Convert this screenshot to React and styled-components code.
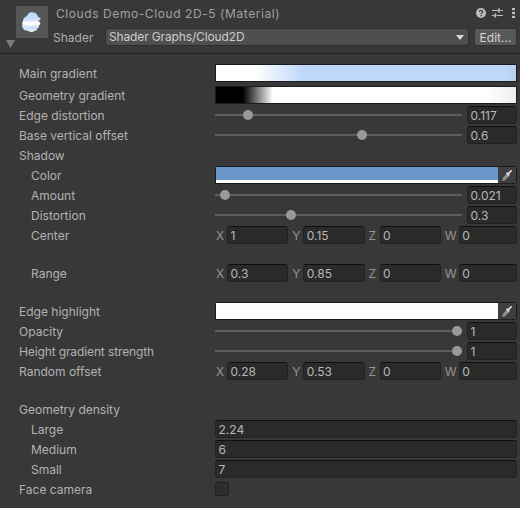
import React from "react";
import styled, { createGlobalStyle } from "styled-components";

const Global = createGlobalStyle`
  html, body { margin: 0; padding: 0; background: #383838; }
  body { font-family: Inter, "Noto Sans", sans-serif; font-size: 12px; color: #bdbdbd; }
`;

const Inspector = styled.div`
  width: 520px;
  height: 508px;
  overflow: hidden;
  background: #383838;
  box-sizing: border-box;
`;

const Header = styled.header`
  position: relative;
  display: grid;
  grid-template-columns: 53px 52px 1fr;
  grid-template-rows: 28px 18px;
  height: 54px;
  box-sizing: border-box;
  border-bottom: 1px solid #232323;
  margin-bottom: 10px;
`;

const Thumb = styled.div`
  grid-row: 1 / span 2;
  margin: 6px 0 0 16px;
  width: 32px;
  height: 32px;
  background: #565656;
  display: flex;
  align-items: center;
  justify-content: center;
`;

const Fold = styled.svg`
  position: absolute;
  left: 6px;
  top: 40px;
`;

const TitleRow = styled.div`
  grid-column: 2 / span 2;
  display: flex;
  align-items: flex-start;
  padding: 6px 5px 0 3px;
  height: 22px;
`;

const Title = styled.div`
  flex: 1;
  font-size: 12px;
  line-height: 15px;
  letter-spacing: 0.58px;
  color: #a0a0a0;
`;

const HeadIcons = styled.div`
  display: flex;
  align-items: center;
  gap: 6px;
  padding: 2px 0 0 0;
`;

const ShaderLabel = styled.div`
  font-size: 12px;
  line-height: 18px;
  color: #aeaeae;
  padding-top: 1px;
`;

const ShaderControls = styled.div`
  display: flex;
  gap: 5px;
  padding-right: 3px;
`;

const Dropdown = styled.div`
  flex: 1;
  height: 18px;
  box-sizing: border-box;
  display: flex;
  align-items: center;
  justify-content: space-between;
  padding: 0 4px 0 3px;
  background: #4f4f4f;
  border: 1px solid #2e2e2e;
  border-radius: 3px;
  color: #cccccc;
  letter-spacing: -0.14px;
  line-height: 16px;
`;

const EditButton = styled.div`
  width: 43px;
  height: 18px;
  box-sizing: border-box;
  display: flex;
  align-items: center;
  justify-content: center;
  background: #585858;
  border: 1px solid #303030;
  border-radius: 3px;
  color: #d4d4d4;
`;

const Body = styled.div`
  display: flex;
  flex-direction: column;
  padding: 0 3px 0 0;
`;

const Row = styled.div`
  display: grid;
  grid-template-columns: 215px 1fr;
  align-items: start;
  height: 20px;
  margin-top: ${(p) => p.$gap || 0}px;
`;

const Label = styled.div`
  line-height: 20px;
  padding-left: ${(p) => (p.$indent ? 31 : 19)}px;
  letter-spacing: ${(p) => (p.$tight ? "-0.12px" : "0")};
  color: #b2b2b2;
  white-space: nowrap;
`;

const GradientBar = styled.div`
  height: 18px;
  box-sizing: border-box;
  border: 1px solid #1b1b1b;
  background: ${(p) => p.$bg};
`;

const SliderWrap = styled.div`
  display: flex;
  gap: 5px;
`;

const Track = styled.div`
  position: relative;
  flex: 1;
  height: 18px;
  &::before {
    content: "";
    position: absolute;
    left: 0;
    right: 0;
    top: 8px;
    height: 2px;
    background: #5e5e5e;
  }
`;

const Knob = styled.div`
  position: absolute;
  top: 4px;
  width: 10px;
  height: 10px;
  border-radius: 50%;
  background: #999999;
  transform: translateX(-5px);
`;

const Field = styled.div`
  box-sizing: border-box;
  height: 18px;
  flex: ${(p) => (p.$fixed ? "0 0 50px" : "1")};
  min-width: 0;
  display: flex;
  align-items: center;
  padding: 1px 0 0 2.5px;
  background: #2a2a2a;
  border: 1px solid #212121;
  border-top-color: #0f0f0f;
  border-radius: 3px;
  color: #b8b8b8;
  line-height: 15px;
`;

const ColorBox = styled.div`
  display: flex;
  height: 18px;
  box-sizing: border-box;
  border: 1px solid #1b1b1b;
  border-radius: 2px 3px 3px 2px;
  background: #3a3a3a;
`;

const Swatch = styled.div`
  flex: 1;
  display: flex;
  flex-direction: column;
`;

const SwatchColor = styled.div`
  flex: 1;
  background: ${(p) => p.$color};
`;

const SwatchAlpha = styled.div`
  height: 3px;
  background: #ffffff;
`;

const Picker = styled.div`
  flex: 0 0 18px;
  display: flex;
  align-items: center;
  justify-content: center;
  background: #3e3e3e;
`;

const Vec = styled.div`
  display: grid;
  grid-template-columns: repeat(4, 1fr);
  gap: 3px;
`;

const Cell = styled.div`
  display: flex;
  align-items: center;
`;

const Axis = styled.span`
  flex: 0 0 ${(p) => p.$w}px;
  padding-left: 1px;
  box-sizing: border-box;
  color: #969696;
`;

const Check = styled.div`
  width: 14px;
  height: 14px;
  margin-top: 2px;
  box-sizing: border-box;
  background: #2e2e2e;
  border: 1px solid #212121;
  border-radius: 2px;
`;

const Help = () => (
  <svg width="10" height="10" viewBox="0 0 10 10">
    <circle cx="5" cy="5" r="5" fill="#bebebe" />
    <path d="M3.3 3.9C3.4 2.9 4.1 2.4 5 2.4c1 0 1.7.6 1.7 1.4 0 .7-.4 1-1 1.4-.4.3-.6.4-.6.9" fill="none" stroke="#383838" strokeWidth="1.2" />
    <rect x="4.4" y="6.9" width="1.3" height="1.3" fill="#383838" />
  </svg>
);

const Tune = () => (
  <svg width="11" height="10" viewBox="0 0 11 10">
    <path d="M0 2.5h6M8.5 2.5h2.5M0 7.5h2M4.5 7.5h6.5" stroke="#bebebe" strokeWidth="1.2" fill="none" />
    <path d="M7 .5v4M3.3 5.5v4" stroke="#bebebe" strokeWidth="1.8" fill="none" />
  </svg>
);

const Kebab = () => (
  <svg width="3" height="10" viewBox="0 0 3 10" style={{ marginLeft: 3 }}>
    <rect y="0" width="3" height="2.2" fill="#bebebe" />
    <rect y="3.9" width="3" height="2.2" fill="#bebebe" />
    <rect y="7.8" width="3" height="2.2" fill="#bebebe" />
  </svg>
);

const Cloud = () => (
  <svg width="32" height="32" viewBox="0 0 32 32">
    <defs>
      <linearGradient id="cl" x1="0" y1="0" x2="0" y2="1">
        <stop offset="0" stopColor="#bcd5f8" />
        <stop offset="0.4" stopColor="#cfe1fb" />
        <stop offset="0.55" stopColor="#ffffff" />
        <stop offset="0.8" stopColor="#c6dcfa" />
        <stop offset="1" stopColor="#f2f7ff" />
      </linearGradient>
    </defs>
    <g transform="translate(-1.5 1) scale(1.05)">
      <path
        d="M13 6.5c1-1.5 3-2 5-1.3 2 .2 3.5 1.2 4 3 .2 1 .6 1.4 1.5 1.7 1.2.3 1.7 1.2 1 2-.6.7-1.5.7-1.6 1.4.8.7 1.8 1.4 1.6 2.6-.2 1-1.2 1.2-1.2 2.2 0 1.3-.8 2-1.6 2.6-.4 1.4-1.2 1.8-2.6 2.1-1.4.6-2.8 1.3-4.2.8-1.4-.4-2-1.2-3.4-1.2-1.7 0-3.3-.8-3.4-2.4-.8-.6-1.3-1.5-.6-2.6.1-1-.4-1.8 0-2.8.3-1 .8-1.2.8-2.2 0-1.2.4-2 1.6-2.4.8-.6 1.2-1.4 2.6-2.5z"
        fill="url(#cl)"
      />
      <path d="M8 15.5c3-1.2 5 .6 8-.4 2-.6 4-.4 6 .8-2 1.2-4 .8-6 1.4-3 .8-5-.6-8-1.8z" fill="#ffffff" />
    </g>
  </svg>
);

const Dropper = () => (
  <svg width="13" height="13" viewBox="0 0 13 13">
    <path d="M1 12l.7-3 4.3-4.3 2.3 2.3L4 11.3z" fill="#8f8f8f" />
    <path d="M5.6 3.6l1.6-.1 2.2-2.2c.9-.8 2.1.4 1.3 1.3L8.5 4.8l-.1 1.6-.9.8-2.8-2.8z" fill="#d8d8d8" />
  </svg>
);

const Slider = ({ value, text }) => (
  <SliderWrap>
    <Track>
      <Knob style={{ left: `calc(5px + (100% - 10px) * ${value})` }} />
    </Track>
    <Field $fixed>{text}</Field>
  </SliderWrap>
);

const Vector = ({ values }) => (
  <Vec>
    {["X", "Y", "Z", "W"].map((a, i) => (
      <Cell key={a}>
        <Axis $w={a === "W" ? 15 : 12}>{a}</Axis>
        <Field>{values[i]}</Field>
      </Cell>
    ))}
  </Vec>
);

const ColorField = ({ color }) => (
  <ColorBox>
    <Swatch>
      <SwatchColor $color={color} />
      {color !== "#ffffff" && <SwatchAlpha />}
    </Swatch>
    <Picker>
      <Dropper />
    </Picker>
  </ColorBox>
);

export default function App() {
  return (
    <Inspector>
      <Global />
      <Header>
        <Thumb>
          <Cloud />
        </Thumb>
        <TitleRow>
          <Title>Clouds Demo-Cloud 2D-5 (Material)</Title>
          <HeadIcons>
            <Help />
            <Tune />
            <Kebab />
          </HeadIcons>
        </TitleRow>
        <ShaderLabel>Shader</ShaderLabel>
        <ShaderControls>
          <Dropdown>
            Shader Graphs/Cloud2D
            <svg width="8" height="5" viewBox="0 0 8 5">
              <path d="M0 0h8L4 5z" fill="#d8d8d8" />
            </svg>
          </Dropdown>
          <EditButton>Edit...</EditButton>
        </ShaderControls>
        <Fold width="9" height="8" viewBox="0 0 9 8">
          <path d="M0 0h9L4.5 8z" fill="#7d7d7d" />
        </Fold>
      </Header>
      <Body>
        <Row>
          <Label>Main gradient</Label>
          <GradientBar $bg="linear-gradient(90deg,#ffffff 0%,#ffffff 13%,#c0d8f8 29%,#c0d8f8 96%,#b8d0f0 100%)" />
        </Row>
        <Row $gap={2}>
          <Label>Geometry gradient</Label>
          <GradientBar $bg="linear-gradient(90deg,#000000 0%,#000000 9%,#ffffff 19%,#ffffff 90%,#eeeeee 100%)" />
        </Row>
        <Row>
          <Label>Edge distortion</Label>
          <Slider value={0.117} text="0.117" />
        </Row>
        <Row>
          <Label>Base vertical offset</Label>
          <Slider value={0.6} text="0.6" />
        </Row>
        <Row>
          <Label>Shadow</Label>
        </Row>
        <Row>
          <Label $indent>Color</Label>
          <ColorField color="#6996c9" />
        </Row>
        <Row>
          <Label $indent>Amount</Label>
          <Slider value={0.021} text="0.021" />
        </Row>
        <Row>
          <Label $indent>Distortion</Label>
          <Slider value={0.3} text="0.3" />
        </Row>
        <Row>
          <Label $indent>Center</Label>
          <Vector values={["1", "0.15", "0", "0"]} />
        </Row>
        <Row $gap={18}>
          <Label $indent>Range</Label>
          <Vector values={["0.3", "0.85", "0", "0"]} />
        </Row>
        <Row $gap={18}>
          <Label>Edge highlight</Label>
          <ColorField color="#ffffff" />
        </Row>
        <Row>
          <Label>Opacity</Label>
          <Slider value={1} text="1" />
        </Row>
        <Row>
          <Label $tight>Height gradient strength</Label>
          <Slider value={1} text="1" />
        </Row>
        <Row>
          <Label>Random offset</Label>
          <Vector values={["0.28", "0.53", "0", "0"]} />
        </Row>
        <Row $gap={18}>
          <Label>Geometry density</Label>
        </Row>
        <Row>
          <Label $indent>Large</Label>
          <Field>2.24</Field>
        </Row>
        <Row>
          <Label $indent>Medium</Label>
          <Field>6</Field>
        </Row>
        <Row>
          <Label $indent>Small</Label>
          <Field>7</Field>
        </Row>
        <Row>
          <Label>Face camera</Label>
          <Check />
        </Row>
      </Body>
    </Inspector>
  );
}
